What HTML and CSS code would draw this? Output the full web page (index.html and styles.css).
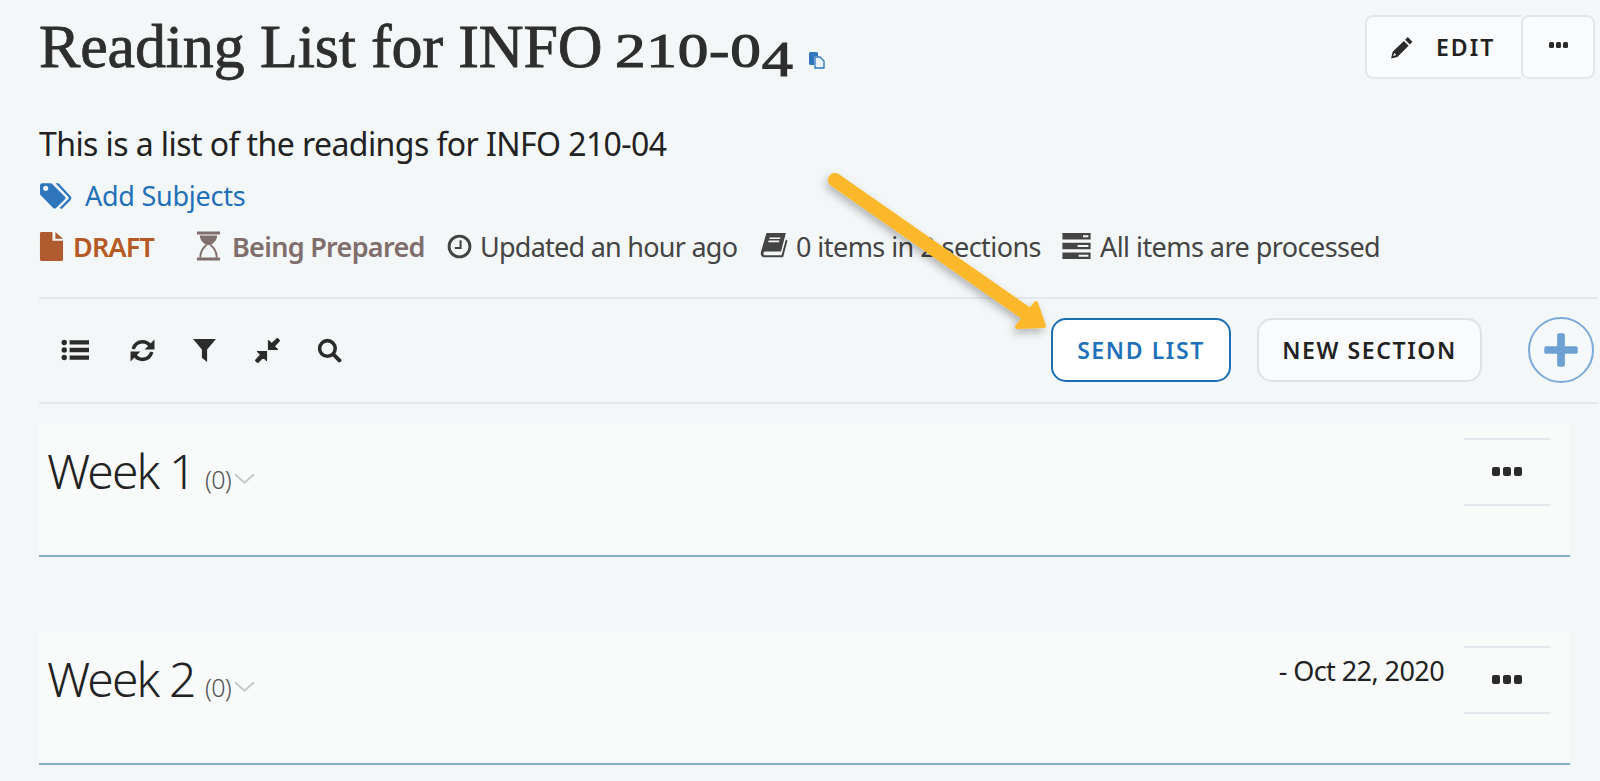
FILE: index.html
```html
<!DOCTYPE html>
<html lang="en">
<head>
<meta charset="utf-8">
<title>Reading List for INFO 210-04</title>
<link rel="stylesheet" href="styles.css">
</head>
<body>
<main class="page">
  <header class="head">
    <h1 class="title"><span class="title-text">Reading List for INFO <span class="oldnum">210-0<span class="oldfour">4</span></span></span><svg class="copy-ic" viewBox="0 0 18 18"><path fill="#2f76bd" d="M1 2.5A1.5 1.5 0 0 1 2.500 1h6A1.500 1.500 0 0 1 10 2.500V5H7.500A1.500 1.500 0 0 0 6 6.500V14H2.500A1.500 1.500 0 0 1 1 12.500z"/><path fill="#eaf2fa" stroke="#2f76bd" stroke-width="1.300" d="M7 6h5l4 4v7H7z"/></svg></h1>
    <div class="actions">
      <button class="btn-edit"><svg class="ic-pencil" viewBox="0 0 24 24"><path fill="#2b2b2b" d="M18 2l4.500 4.500-2.500 2.500L15.500 4.500zM14.300 5.700l4.500 4.500L8 21 2 22.500 3.500 16zM5 17.200l-1 3 3-1z"/></svg><span>EDIT</span></button>
      <button class="btn-more"><svg class="dots-sm" viewBox="0 0 19 6"><rect x="0" y="0" width="5" height="6" rx="1.500"/><rect x="7" y="0" width="5" height="6" rx="1.500"/><rect x="14" y="0" width="5" height="6" rx="1.500"/></svg></button>
    </div>
  </header>

  <p class="desc">This is a list of the readings for INFO 210-04</p>

  <p class="subjects"><svg class="ic-tags" viewBox="0 0 32 26"><path fill="#2f76bd" d="M1 3a2 2 0 0 1 2-2h9l13 13a2 2 0 0 1 0 2.800L16.500 25a2 2 0 0 1-2.800 0L1 12zM6.500 8.500a2.500 2.500 0 1 0 0-5 2.500 2.500 0 0 0 0 5z"/><path fill="#2f76bd" d="M16 1h3l11.500 12.500a3 3 0 0 1 0 4L22 26l-2-1 8.500-8.500a1.500 1.500 0 0 0 0-2z"/></svg><a href="#">Add Subjects</a></p>

  <div class="meta">
    <span class="m-draft"><svg class="ic-file" viewBox="0 0 26 30"><path fill="#b05a30" d="M1 1.500A1.500 1.500 0 0 1 2.500 0H14v9h11v19.500a1.500 1.500 0 0 1-1.500 1.500h-21A1.500 1.500 0 0 1 1 28.500z"/><path fill="#b05a30" d="M17 0l8 7h-8z"/></svg>DRAFT</span>
    <span class="m-prep"><svg class="ic-glass" viewBox="0 0 26 30"><path fill="#7f6e6c" d="M1 0h24v3H1zM1 27h24v3H1zM4 4h18c0 5-4 8-7 10h-4C8 12 4 9 4 4z"/><path fill="none" stroke="#7f6e6c" stroke-width="2" d="M11 14c-4 3-6.500 7-6.500 13M15 14c4 3 6.500 7 6.500 13"/></svg>Being Prepared</span>
    <span class="m-item m-updated"><svg class="ic-clock" viewBox="0 0 24 24"><circle cx="12" cy="12" r="10" fill="none" stroke="#444" stroke-width="2.800"/><path fill="none" stroke="#444" stroke-width="2" d="M13 6v7.500H7.500"/></svg>Updated an hour ago</span>
    <span class="m-item m-book"><svg class="ic-book" viewBox="0 0 26 26"><path fill="#444" d="M6 1h18l-4.500 17H4.500a2 2 0 0 0-.5 3.500h16L24 7l1.500 1-4 15.500H4C1.500 23.500 0 21 1 18z"/><path fill="#f4f7f8" d="M9 5h10l-.4 1.500H8.600zM8 8h10l-.4 1.500H7.600z"/></svg>0 items in 2 sections</span>
    <span class="m-item m-proc"><svg class="ic-server" viewBox="0 0 26 24"><path fill="#444" d="M0 0h26v6H0zM0 9h26v6H0zM0 18h26v6H0z"/><path fill="#f4f7f8" d="M19 2h5v2h-5zM14 11h10v2H14zM15 20h9v2h-9z"/></svg>All items are processed</span>
  </div>

  <nav class="toolbar">
    <div class="tools">
      <svg class="tool tool-list" viewBox="0 0 26 20"><circle cx="3" cy="3" r="2.500"/><circle cx="3" cy="10" r="2.500"/><circle cx="3" cy="17" r="2.500"/><path d="M8 1h18v4H8zM8 8h18v4H8zM8 15h18v4H8z"/></svg>
      <svg class="tool" viewBox="0 0 24 24"><path fill="none" stroke="#2b2b2b" stroke-width="3.400" d="M3 10.500C4.500 6 8 3.500 12 3.500c3 0 5.500 1.300 7.200 3.700M21 13.500c-1.500 4.500-5 7-9 7-3 0-5.500-1.300-7.200-3.700"/><path d="M23.500 1.500v9.500h-9.500zM.5 22.500V13h9.500z"/></svg>
      <svg class="tool" viewBox="0 0 22 24"><path d="M0 1h22L13.500 11v12L8.500 19v-8z"/></svg>
      <svg class="tool" viewBox="0 0 24 24"><path stroke="#2b2b2b" stroke-width="1.200" stroke-linejoin="round" d="M13 11V2.500l3 3L21.500.500 23.500 2.500l-5 5.500 3 3zM11 13v8.500l-3-3L2.500 23.500.500 21.500l5-5.500-3-3z"/></svg>
      <svg class="tool" viewBox="0 0 24 24"><circle cx="10" cy="10" r="7.500" fill="none" stroke="#2b2b2b" stroke-width="3.400"/><path fill="none" stroke="#2b2b2b" stroke-width="3.800" stroke-linecap="round" d="M15.500 15.500l6 6"/></svg>
    </div>
    <div class="tool-actions">
      <button class="pill pill-send">SEND LIST</button>
      <button class="pill pill-new">NEW SECTION</button>
      <button class="plus"><svg viewBox="0 0 28 28"><path fill="#6da0d3" d="M11 2.500a1.500 1.500 0 0 1 1.500-1.500h3A1.500 1.500 0 0 1 17 2.500V11h8.500a1.500 1.500 0 0 1 1.500 1.500v3a1.500 1.500 0 0 1-1.500 1.500H17v8.500a1.500 1.500 0 0 1-1.500 1.500h-3a1.500 1.500 0 0 1-1.500-1.500V17H2.500A1.500 1.500 0 0 1 1 15.500v-3A1.500 1.500 0 0 1 2.500 11H11z"/></svg></button>
    </div>
  </nav>

  <section class="week">
    <h2 class="week-title">Week 1 <small>(0)</small><svg class="chev" viewBox="0 0 20 10"><path fill="none" stroke="#c4c8ca" stroke-width="1.800" d="M1 1l9 8 9-8"/></svg></h2>
    <div class="week-menu"><svg class="dots" viewBox="0 0 30 12"><rect x="0" y="1" width="8" height="9" rx="2"/><rect x="11" y="1" width="8" height="9" rx="2"/><rect x="22" y="1" width="8" height="9" rx="2"/></svg></div>
  </section>

  <section class="week week-second">
    <h2 class="week-title">Week 2 <small>(0)</small><svg class="chev" viewBox="0 0 20 10"><path fill="none" stroke="#c4c8ca" stroke-width="1.800" d="M1 1l9 8 9-8"/></svg></h2>
    <div class="week-date">- Oct 22, 2020</div>
    <div class="week-menu"><svg class="dots" viewBox="0 0 30 12"><rect x="0" y="1" width="8" height="9" rx="2"/><rect x="11" y="1" width="8" height="9" rx="2"/><rect x="22" y="1" width="8" height="9" rx="2"/></svg></div>
  </section>
</main>

<svg class="arrow" viewBox="0 0 240 170">
  <defs><filter id="sh" x="-20%" y="-20%" width="140%" height="140%"><feDropShadow dx="-2" dy="4" stdDeviation="4" flood-color="#000" flood-opacity=".28"/></filter></defs>
  <g filter="url(#sh)">
    <path fill="none" stroke="#fbb82b" stroke-width="14" stroke-linecap="round" d="M27 14L222 150"/>
    <path fill="#fbb82b" stroke="#fbb82b" stroke-width="4" stroke-linejoin="round" d="M228 137L236 160L209 161z"/>
  </g>
</svg>
</body>
</html>
```

FILE: styles.css
```css
* { box-sizing: border-box; }
html, body { margin: 0; padding: 0; height: 100%; }
body {
  background: #f4f7f8;
  color: #222;
  font-family: "Noto Sans", "Open Sans", sans-serif;
  overflow: hidden;
  position: relative;
}
.page { padding: 0 2px 0 39px; width: 1600px; }
button { font-family: inherit; cursor: pointer; }
svg { display: block; flex: none; }

.head { display: flex; justify-content: space-between; align-items: flex-start; height: 120px; padding-top: 15px; padding-right: 3px; }
.title {
  margin: 0;
  display: flex;
  align-items: flex-end;
  font-family: "Liberation Serif", serif;
  font-weight: 400;
  font-size: 62px;
  line-height: 62px;
  color: #2e2e2e;
  -webkit-text-stroke: .8px #2e2e2e;
  letter-spacing: -.15px;
  white-space: nowrap;
}
.oldnum {
  display: inline-block;
  font-size: 49px;
  letter-spacing: .6px;
  -webkit-text-stroke: 1.100px #2e2e2e;
  transform: scaleX(1.25);
  transform-origin: left bottom;
  margin-left: -3px;
  margin-right: 35px;
}
.oldfour { position: relative; top: 9px; font-size: 50px; }
.copy-ic { width: 18px; height: 18px; margin: 0 0 13px 15px; }
.actions { display: flex; }
.btn-edit, .btn-more {
  height: 64px;
  background: #fafbfc;
  border: 2px solid #e4e6e8;
  color: #222;
  display: flex;
  align-items: center;
}
.btn-edit { width: 156px; border-right: 0; border-radius: 8px 0 0 8px; padding: 0 0 0 22px; gap: 22px; font-weight: 600; letter-spacing: 2px; }
.btn-edit span { font-size: 23px; }
.btn-more { width: 74px; border-radius: 8px; justify-content: center; margin-left: 0; padding: 0 0 4px; }
.ic-pencil { width: 25px; height: 25px; }
.dots-sm { width: 19px; height: 6px; fill: #2b2b2b; }

.desc { margin: 0; height: 48px; font-size: 32px; line-height: 48px; letter-spacing: -.58px; color: #222; }
.subjects { margin: 0; height: 52px; display: flex; align-items: center; gap: 13px; padding-top: 2px; }
.subjects a { color: #2270b8; text-decoration: none; font-size: 27px; letter-spacing: -.25px; }
.ic-tags { width: 33px; height: 27px; }

.meta { display: flex; align-items: center; height: 52px; margin-bottom: 25px; font-size: 27px; letter-spacing: -.75px; color: #444; white-space: nowrap; }
.meta > span { display: flex; align-items: center; }
.m-draft { color: #b55a24; font-weight: 600; letter-spacing: -.8px; width: 157px; }
.m-prep { color: #7f6e6c; font-weight: 600; letter-spacing: -.7px; width: 251px; }
.m-updated { width: 313px; }
.m-book { width: 301px; letter-spacing: -.55px; }
.m-proc { letter-spacing: -.55px; }
.ic-file { width: 25px; height: 31px; margin-right: 9px; }
.ic-glass { width: 25px; height: 30px; margin-right: 11px; }
.ic-clock { width: 25px; height: 25px; margin-right: 8px; }
.ic-book { width: 28px; height: 28px; margin-right: 8px; }
.ic-server { width: 31px; height: 26px; margin-right: 8px; }

.toolbar {
  height: 107px;
  padding-bottom: 1px;
  border-top: 2px solid #e3e9ed;
  border-bottom: 2px solid #e3e9ed;
  display: flex;
  justify-content: space-between;
  align-items: center;
}
.tools { display: flex; align-items: center; gap: 37.500px; padding-left: 22px; }
.tool { width: 25px; height: 25px; fill: #2b2b2b; }
.tool-list { width: 28px; height: 22px; margin-right: 3px; }
.tool-actions { display: flex; align-items: center; margin-right: 4px; }
.pill {
  height: 64px;
  border-radius: 15px;
  font-size: 23px;
  font-weight: 600;
  letter-spacing: 1.600px;
  background: #fafbfc;
  border: 2px solid #dfe1e3;
  color: #222;
  padding: 0;
}
.pill-send { width: 180px; background: #fff; border-color: #1c6fb5; color: #1f72ba; margin-right: 26px; }
.pill-new { width: 225px; margin-right: 46px; }
.plus { width: 66px; height: 66px; border-radius: 50%; background: #f6f9fb; border: 2px solid #7daad8; padding: 0; display: flex; align-items: center; justify-content: center; }
.plus svg { width: 36px; height: 36px; }

.week {
  width: 1531px;
  height: 133px;
  margin-top: 20px;
  background: #f9fbfb;
  border-bottom: 2px solid #85afc2;
  display: flex;
  align-items: flex-start;
  padding-left: 8px;
}
.week-second { margin-top: 75px; }
.week-title {
  margin: 15px auto 0 0;
  display: flex;
  align-items: baseline;
  font-weight: 300;
  font-size: 48px;
  line-height: 64px;
  color: #222;
  letter-spacing: -1.900px;
  white-space: pre;
}
.week-title small { font-size: 25px; letter-spacing: -.8px; color: #555; }
.chev { width: 21px; height: 11px; margin-left: 3px; align-self: center; margin-top: 6px; }
.week-date { font-size: 27px; line-height: 37px; letter-spacing: -.58px; color: #222; margin-top: 20px; margin-right: 20px; }
.week-menu {
  width: 87px;
  height: 68px;
  margin-top: 14px;
  margin-right: 19px;
  border-top: 2px solid #e3e9ed;
  border-bottom: 2px solid #e3e9ed;
  display: flex;
  align-items: center;
  justify-content: center;
}
.dots { width: 30px; height: 12px; fill: #2b2b2b; margin-left: -2px; margin-top: -1px; }

.arrow { position: absolute; left: 808px; top: 166px; width: 240px; height: 170px; overflow: visible; }
```
